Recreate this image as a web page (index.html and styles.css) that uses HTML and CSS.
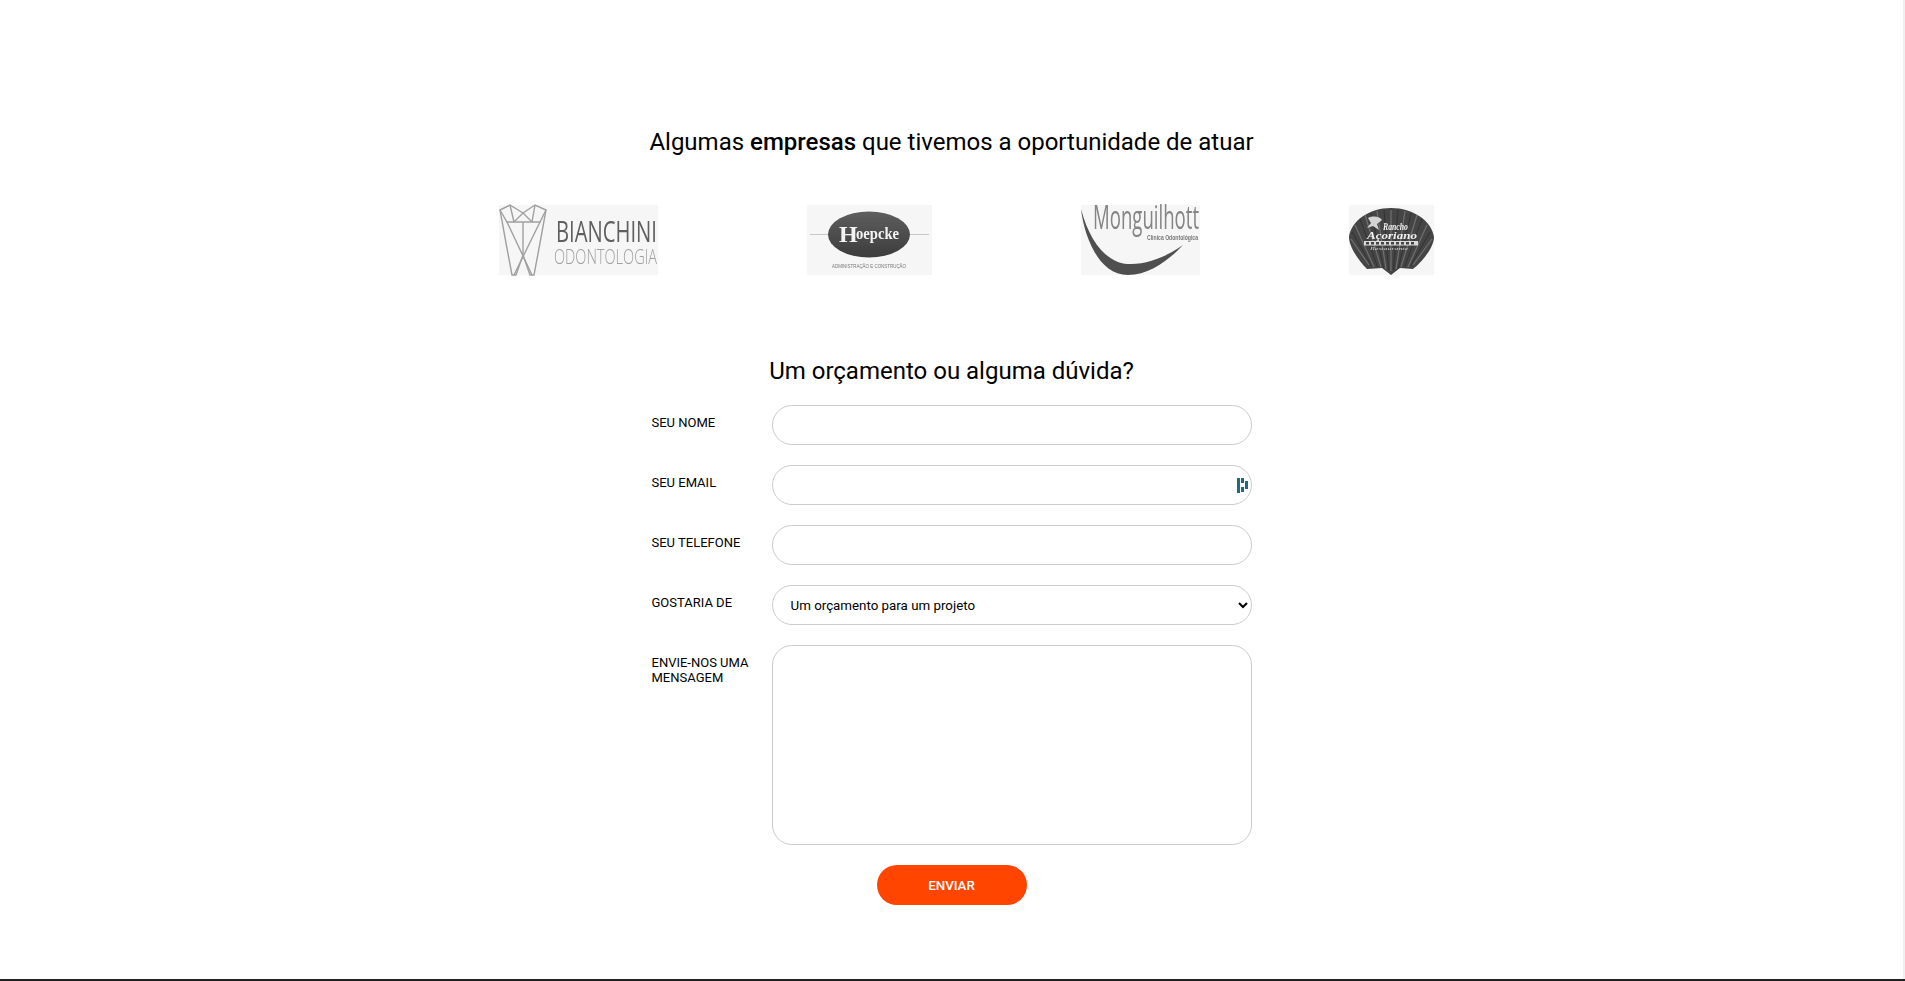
FILE: index.html
```html
<!DOCTYPE html>
<html lang="pt-BR">
<head>
    <meta charset="UTF-8">
    <meta name="viewport" content="width=device-width, initial-scale=1.0">
    <title>Contato</title>
    <link rel="stylesheet" href="styles.css">
</head>
<body>
    <div class="page">
        <section class="clients">
            <h2 class="clients-title">Algumas <strong>empresas</strong> que tivemos a oportunidade de atuar</h2>

            <div class="logos">
                <svg class="logo logo-bianchini" viewBox="0 0 159 70" role="img" aria-label="Bianchini Odontologia">
                    <defs><filter id="soft1"><feGaussianBlur stdDeviation="0.5"/></filter></defs>
                    <rect width="159" height="70" fill="#f6f6f6"/>
                    <g filter="url(#soft1)">
                        <g fill="none" stroke="#a0a0a0" stroke-width="1.4">
                            <path d="M1 5 L11 0 L24 8 L36 0 L47 5 L41 38 L35 70 L31 70 L24 50 L17 70 L13 70 L7 38 Z"/>
                            <path d="M1 5 L8 17 L41 17 L47 5"/>
                            <path d="M11 0 L15 17 M36 0 L33 17 M15 17 L24 8 L33 17"/>
                            <path d="M8 17 L33 70 M41 17 L15 70"/>
                            <path d="M24 17 L24 50"/>
                        </g>
                        <text x="57" y="37" class="logo-name" fill="#5f5f5f" textLength="101" lengthAdjust="spacingAndGlyphs">BIANCHINI</text>
                        <text x="55" y="59" class="logo-sub" fill="#a0a0a0" textLength="103" lengthAdjust="spacingAndGlyphs">ODONTOLOGIA</text>
                    </g>
                </svg>

                <svg class="logo logo-hoepcke" viewBox="0 0 125 70" role="img" aria-label="Hoepcke">
                    <defs>
                        <filter id="soft2"><feGaussianBlur stdDeviation="0.5"/></filter>
                        <linearGradient id="oval" x1="0" y1="0" x2="0" y2="1">
                            <stop offset="0" stop-color="#5e5e5e"/>
                            <stop offset="1" stop-color="#3c3c3c"/>
                        </linearGradient>
                    </defs>
                    <rect width="125" height="70" fill="#f6f6f6"/>
                    <g filter="url(#soft2)">
                        <path d="M3 29.500 H122" stroke="#c8c8c8" stroke-width="1"/>
                        <ellipse cx="62" cy="29.500" rx="41" ry="23" fill="url(#oval)"/>
                        <text x="32" y="37" class="logo-h" fill="#f4f4f4">H</text>
                        <text x="49" y="34" class="logo-oepcke" fill="#f4f4f4" textLength="43" lengthAdjust="spacingAndGlyphs">oepcke</text>
                        <text x="25" y="63" class="logo-tiny" fill="#777" textLength="74" lengthAdjust="spacingAndGlyphs">ADMINISTRAÇÃO E CONSTRUÇÃO</text>
                    </g>
                </svg>

                <svg class="logo logo-monguilhott" viewBox="0 0 119 70" role="img" aria-label="Monguilhott">
                    <defs><filter id="soft3"><feGaussianBlur stdDeviation="0.5"/></filter></defs>
                    <rect width="119" height="70" fill="#f6f6f6"/>
                    <g filter="url(#soft3)">
                        <path d="M0 4 C3 30 17 70 47 70 C68 70 88 55 102 40 C85 52 65 60 47 59 C25 58 8 35 0 4 Z" fill="#505050"/>
                        <text x="12" y="24" class="logo-mong" fill="#858585" textLength="106" lengthAdjust="spacingAndGlyphs">Monguilhott</text>
                        <text x="66" y="35" class="logo-clinica" fill="#777" textLength="51" lengthAdjust="spacingAndGlyphs">Clínica Odontológica</text>
                    </g>
                </svg>

                <svg class="logo logo-rancho" viewBox="0 0 85 70" role="img" aria-label="Rancho Açoriano">
                    <defs><filter id="soft4"><feGaussianBlur stdDeviation="0.35"/></filter></defs>
                    <rect width="85" height="70" fill="#f6f6f6"/>
                    <g filter="url(#soft4)">
                        <path d="M0 32 C2 16 20 3 42 3 C64 3 83 16 85 32 C85 42 74 56 64 64 L51 63 L42 70 L33 63 L18 64 C10 56 0 42 0 32 Z" fill="#454545"/>
                        <g stroke="#707070" stroke-width="1.200" fill="none">
                            <path d="M42 66 L42 5 M37 64 L28 6 M47 64 L56 6 M32 62 L16 10 M52 62 L68 10 M25 62 L6 20 M59 62 L78 20 M20 60 L2 34 M64 60 L83 34"/>
                        </g>
                        <g stroke="#2e2e2e" stroke-width="0.800" fill="none">
                            <path d="M39.500 65 L35 5 M44.500 65 L49 5 M34.500 63 L22 8 M49.500 63 L62 8 M28.500 62 L11 14 M55.500 62 L73 14 M22.500 61 L3 27 M61.500 61 L81 27"/>
                        </g>
                        <path d="M19 13 C25 10 31 12 33 15 L28 19 L30 25 L24 21 L18 23 L22 18 Z" fill="#d4d4d4"/>
                        <text x="34" y="25" class="logo-rancho-name" fill="#f2f2f2" textLength="25" lengthAdjust="spacingAndGlyphs">Rancho</text>
                        <text x="18" y="34" class="logo-rancho-name" fill="#f2f2f2" textLength="50" lengthAdjust="spacingAndGlyphs">Açoriano</text>
                        <rect x="15" y="36" width="54" height="4.500" fill="#dadada"/>
                        <path d="M17 38.200 H67" stroke="#444" stroke-width="2.500" stroke-dasharray="3 2"/>
                        <text x="21" y="45" class="logo-rancho-sub" fill="#cfcfcf" textLength="38" lengthAdjust="spacingAndGlyphs">Restaurante</text>
                    </g>
                </svg>
            </div>
        </section>

        <section class="contact">
            <h2 class="contact-title">Um orçamento ou alguma dúvida?</h2>

            <form class="contact-form" onsubmit="return false;">
                <div class="field">
                    <label for="nome">SEU NOME</label>
                    <input type="text" id="nome" class="control">
                </div>

                <div class="field">
                    <label for="email">SEU EMAIL</label>
                    <div class="email-wrap">
                        <input type="email" id="email" class="control">
                        <!-- password manager icon that sits on the field -->
                        <svg class="field-icon" viewBox="0 0 11 15" aria-hidden="true">
                            <rect x="0" y="0" width="3" height="15" fill="#1c6b7f"/>
                            <rect x="4" y="0" width="3" height="5" fill="#1c6b7f"/>
                            <rect x="4" y="9" width="3" height="5" fill="#1c6b7f"/>
                            <rect x="8" y="3" width="3" height="8" fill="#1c6b7f"/>
                        </svg>
                    </div>
                </div>

                <div class="field">
                    <label for="telefone">SEU TELEFONE</label>
                    <input type="text" id="telefone" class="control">
                </div>

                <div class="field">
                    <label for="assunto">GOSTARIA DE</label>
                    <select id="assunto" class="control control-select">
                        <option>Um orçamento para um projeto</option>
                        <option>Tirar uma dúvida</option>
                    </select>
                </div>

                <div class="field">
                    <label for="mensagem">ENVIE-NOS UMA MENSAGEM</label>
                    <textarea id="mensagem" class="control control-text"></textarea>
                </div>

                <div class="form-actions">
                    <button type="submit" class="button">ENVIAR</button>
                </div>
            </form>
        </section>
    </div>

    <footer class="footer"></footer>
</body>
</html>
```

FILE: styles.css
```css
* {
    box-sizing: border-box;
}
body {
    margin: 0;
    font-family: Roboto, Arial, sans-serif;
    color: #000;
    background-color: #fff;
}
.page {
    height: 979px;
    border-right: 2px solid #f1f1f1;
}
.clients {
    padding-top: 126px;
}
.clients-title,
.contact-title {
    margin: 0;
    font-size: 24px;
    font-weight: 400;
    line-height: 32px;
    text-align: center;
}
.clients-title strong {
    font-weight: 500;
}
.logos {
    display: flex;
    justify-content: space-between;
    width: 965px;
    margin: 47px auto 0;
    padding-left: 30px;
}
.logo {
    display: block;
    height: 70px;
    overflow: visible;
}
.logo-bianchini {
    width: 159px;
}
.logo-hoepcke {
    width: 125px;
}
.logo-monguilhott {
    width: 119px;
}
.logo-rancho {
    width: 85px;
}
.logo-name {
    font-family: "Open Sans", sans-serif;
    font-size: 29px;
    font-weight: 400;
}
.logo-sub {
    font-family: "Open Sans", sans-serif;
    font-size: 21px;
    font-weight: 300;
}
.logo-h {
    font-family: "Liberation Serif", serif;
    font-size: 24px;
    font-weight: 700;
}
.logo-oepcke {
    font-family: "Liberation Serif", serif;
    font-size: 16px;
    font-weight: 700;
}
.logo-tiny {
    font-family: "Liberation Sans", sans-serif;
    font-size: 5px;
}
.logo-mong {
    font-family: "Open Sans", sans-serif;
    font-size: 32px;
    font-weight: 400;
}
.logo-clinica {
    font-family: "Liberation Sans", sans-serif;
    font-size: 7px;
    font-weight: 700;
}
.logo-rancho-name {
    font-family: "Liberation Serif", serif;
    font-size: 11px;
    font-weight: 700;
    font-style: italic;
}
.logo-rancho-sub {
    font-family: "Liberation Serif", serif;
    font-size: 5px;
    font-style: italic;
}
.contact {
    padding-top: 80px;
}
.contact-form {
    width: 600px;
    margin: 18px auto 0;
}
.field {
    display: flex;
    margin-bottom: 20px;
}
.field label {
    flex: 0 0 120px;
    padding: 10px 20px 0 0;
    font-size: 13px;
    line-height: 15px;
}
.email-wrap {
    position: relative;
    flex: 1;
    display: flex;
}
.control {
    flex: 1;
    min-width: 0;
    height: 40px;
    padding: 0 18px;
    font-family: Roboto, Arial, sans-serif;
    font-size: 13.333px;
    color: #000;
    background-color: #fff;
    border: 1px solid #ccc;
    border-radius: 20px;
    outline: none;
}
.control-select {
    padding: 0 14px;
}
.control-text {
    height: 200px;
    padding: 12px 18px;
    resize: none;
}
.field-icon {
    position: absolute;
    right: 4px;
    top: 13px;
    width: 11px;
    height: 15px;
}
.form-actions {
    display: flex;
    justify-content: center;
}
.button {
    width: 150px;
    height: 40px;
    font-family: Roboto, Arial, sans-serif;
    font-size: 13.333px;
    font-weight: 500;
    color: #fff;
    background-color: #ff4500;
    border: none;
    border-radius: 20px;
    cursor: pointer;
}
.footer {
    height: 2px;
    background-color: #212121;
}
```
